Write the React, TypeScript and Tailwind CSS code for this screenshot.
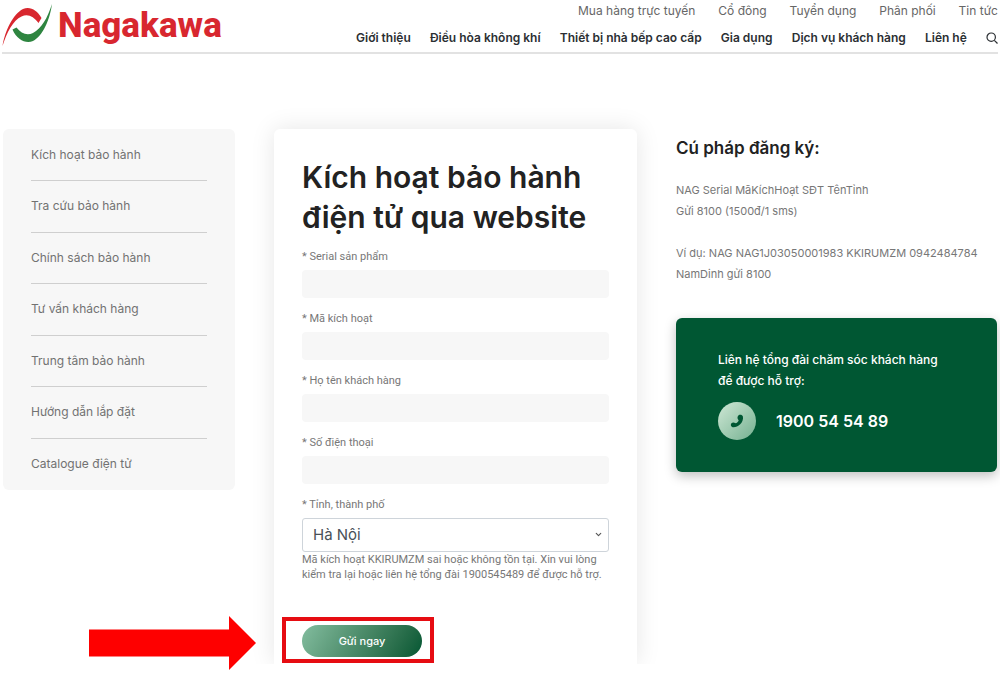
import React from 'react';
import { ChevronDown } from 'lucide-react';

const topLinks = ['Mua hàng trực tuyến', 'Cổ đông', 'Tuyển dụng', 'Phân phối', 'Tin tức'];

const mainLinks = [
  'Giới thiệu',
  'Điều hòa không khí',
  'Thiết bị nhà bếp cao cấp',
  'Gia dụng',
  'Dịch vụ khách hàng',
  'Liên hệ',
];

const sideLinks = [
  'Kích hoạt bảo hành',
  'Tra cứu bảo hành',
  'Chính sách bảo hành',
  'Tư vấn khách hàng',
  'Trung tâm bảo hành',
  'Hướng dẫn lắp đặt',
  'Catalogue điện tử',
];

const fields = [
  { id: 'serial', label: 'Serial sản phẩm' },
  { id: 'code', label: 'Mã kích hoạt' },
  { id: 'name', label: 'Họ tên khách hàng' },
  { id: 'phone', label: 'Số điện thoại' },
];

const Logo: React.FC = () => (
  <a href="#" className="flex items-center gap-1 text-[#d8272f]">
    <svg width="52" height="46" viewBox="0 0 52 46" aria-hidden="true">
      <path d="M0.500 43C3 28 11 11 21 6C28 3 35 7 39.500 15L36.500 20C31.500 13.500 26 10.500 19.500 13.500C11 17.500 5 29 0.500 43Z" fill="#d8272f" />
      <path d="M50 1C48 16 41 33 31 38C24 41 15 37 10.500 26.500L14.500 24.500C19 30.500 25 33 31 30C39.500 25.500 45.500 15 50 1Z" fill="#2e8540" />
    </svg>
    <span className="font-['Roboto',sans-serif] text-[35px] font-extrabold leading-[46px]">Nagakawa</span>
  </a>
);

const Header: React.FC = () => (
  <header className="mx-0.5 flex h-[54px] items-start justify-between border-b-2 border-[#e2e2e2]">
    <div className="pt-[3px]">
      <Logo />
    </div>
    <div className="flex w-[642px] flex-col">
      <nav className="ml-auto flex w-[420px] justify-between pt-[3px] text-xs leading-4 text-[#666]">
        {topLinks.map((text) => (
          <a key={text} href="#" className="whitespace-nowrap">{text}</a>
        ))}
      </nav>
      <nav className="flex items-center justify-between pt-[11px] text-xs font-semibold leading-4 text-[#2b2f33]">
        {mainLinks.map((text) => (
          <a key={text} href="#" className="whitespace-nowrap">{text}</a>
        ))}
        <button type="button" aria-label="Tìm kiếm">
          <svg width="12" height="12" viewBox="0 0 12 12" fill="none" stroke="currentColor" strokeWidth="1.2">
            <circle cx="5.200" cy="5.200" r="4.200" />
            <path d="M8.300 8.300L11.500 11.500" />
          </svg>
        </button>
      </nav>
    </div>
  </header>
);

const Sidebar: React.FC = () => (
  <aside className="self-start rounded-md bg-[#f7f7f7] px-7 py-4">
    <ul className="text-xs leading-5 text-[#727272]">
      {sideLinks.map((text) => (
        <li
          key={text}
          className="border-b border-[#cfcfcf] py-[15px] first:pt-0 even:pb-4 last:border-b-0 last:pb-0"
        >
          <a href="#">{text}</a>
        </li>
      ))}
    </ul>
  </aside>
);

const ActivationForm: React.FC = () => (
  <form className="rounded-t-md bg-white px-7 pb-[7px] pt-7 shadow-[0_0_24px_rgba(0,0,0,0.1)]">
    <h1 className="whitespace-nowrap text-[30px] font-semibold leading-10 text-[#222]">
      Kích hoạt bảo hành
      <br />
      điện tử qua website
    </h1>
    <div className="mt-3 font-['Roboto',sans-serif] text-[11px] leading-4 text-[#777]">
      {fields.map((field) => (
        <div key={field.id} className="mb-[13px]">
          <label htmlFor={field.id} className="block">* {field.label}</label>
          <input id={field.id} type="text" className="mt-[5px] block h-7 w-full rounded bg-[#f7f7f7] px-3" />
        </div>
      ))}
      <label htmlFor="city" className="block">* Tỉnh, thành phố</label>
      <div className="relative mt-[5px]">
        <select
          id="city"
          className="block h-[34px] w-full appearance-none rounded-[3px] border border-[#ced4da] bg-white px-2.5 font-['Inter',sans-serif] text-[15px] leading-6 text-[#495057]"
        >
          <option>Hà Nội</option>
        </select>
        <ChevronDown size={9} strokeWidth={3} className="pointer-events-none absolute right-1.5 top-3 text-[#555]" />
      </div>
      <p className="leading-[15px]">
        Mã kích hoạt KKIRUMZM sai hoặc không tồn tại. Xin vui lòng kiểm tra lại hoặc liên hệ tổng đài 1900545489 để được hỗ trợ.
      </p>
    </div>
    <div className="relative mt-[43px] w-[120px]">
      <button
        type="submit"
        className="h-8 w-full rounded-full bg-linear-120 from-[#83bd9f] to-[#005733] text-[11px] font-medium text-white"
      >
        Gửi ngay
      </button>
      <div className="pointer-events-none absolute -bottom-1.5 -left-5 -right-3 -top-2 border-4 border-[#e60c12]" />
    </div>
  </form>
);

const Contact: React.FC = () => (
  <section className="pt-[7px] text-[11px] text-[#777]">
    <h2 className="text-[17px] font-semibold leading-6 text-[#222]">Cú pháp đăng ký:</h2>
    <p className="mt-5 leading-[21px]">
      NAG Serial MãKíchHoạt SĐT TênTỉnh
      <br />
      Gửi 8100 (1500đ/1 sms)
    </p>
    <p className="mt-[21px] leading-[21px]">
      Ví dụ: NAG NAG1J03050001983 KKIRUMZM 0942484784 NamDinh gửi 8100
    </p>
    <div className="mt-[33px] rounded-md bg-[#005733] px-[42px] pb-8 pt-[31px] text-white shadow-[0_4px_12px_rgba(0,0,0,0.25)]">
      <p className="text-xs font-medium leading-[21px]">
        Liên hệ tổng đài chăm sóc khách hàng
        <br />
        để được hỗ trợ:
      </p>
      <div className="mt-[11px] flex items-center gap-5">
        <span className="flex size-[38px] items-center justify-center rounded-full bg-linear-to-br from-[#cfe8d6] to-[#74b191]">
          <svg width="14" height="14" viewBox="0 0 14 14" aria-hidden="true">
            <path
              d="M8.600 1.200C10 0.300 12.400 0.700 12.900 2.400C13.500 5 12.200 8.200 10.200 10.300C8 12.500 5 13.600 2.600 13.200C0.800 12.900 0.300 10.700 1.400 9.300C2.300 8.200 4 8.100 5.100 8.900L5.700 9.300C7 8.800 8 7.800 8.700 6.400L8.100 5.400C7.200 4.200 7.300 2.200 8.600 1.200Z"
              fill="#005733"
            />
          </svg>
        </span>
        <a href="tel:1900545489" className="text-base font-semibold leading-6">1900 54 54 89</a>
      </div>
    </div>
  </section>
);

const App: React.FC = () => {
  return (
    <div className="relative bg-white pb-3 font-['Inter','Noto_Sans',sans-serif]">
      <Header />
      <main className="grid grid-cols-[232fr_363fr_321fr] gap-[39px] overflow-hidden px-[3px] pt-[75px]">
        <Sidebar />
        <ActivationForm />
        <Contact />
      </main>
      <svg className="absolute bottom-1.5 left-[89px]" width="168" height="54" viewBox="0 0 168 54" aria-hidden="true">
        <path d="M0 13.500H140V0L167 27L140 54V40.500H0Z" fill="#fe0000" />
      </svg>
    </div>
  );
};

export default App;
